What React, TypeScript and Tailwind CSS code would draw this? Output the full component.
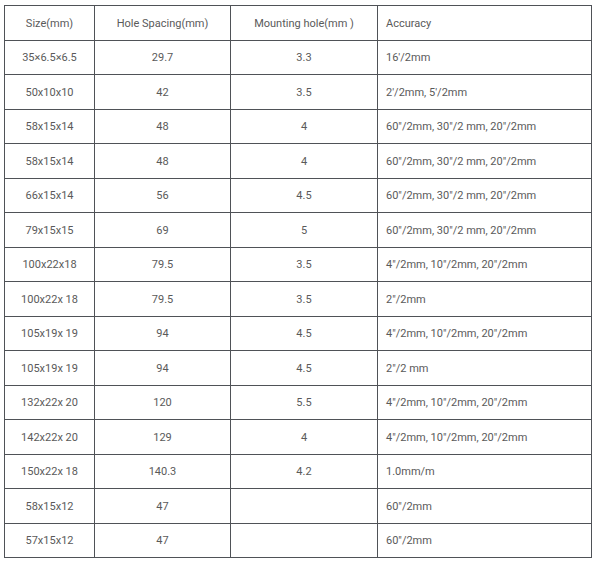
import React from 'react';

const rows: [string, string, string, string][] = [
  ['35×6.5×6.5', '29.7', '3.3', '16′/2mm'],
  ['50x10x10', '42', '3.5', '2′/2mm, 5′/2mm'],
  ['58x15x14', '48', '4', '60″/2mm, 30″/2 mm, 20″/2mm'],
  ['58x15x14', '48', '4', '60″/2mm, 30″/2 mm, 20″/2mm'],
  ['66x15x14', '56', '4.5', '60″/2mm, 30″/2 mm, 20″/2mm'],
  ['79x15x15', '69', '5', '60″/2mm, 30″/2 mm, 20″/2mm'],
  ['100x22x18', '79.5', '3.5', '4″/2mm, 10″/2mm, 20″/2mm'],
  ['100x22x 18', '79.5', '3.5', '2″/2mm'],
  ['105x19x 19', '94', '4.5', '4″/2mm, 10″/2mm, 20″/2mm'],
  ['105x19x 19', '94', '4.5', '2″/2 mm'],
  ['132x22x 20', '120', '5.5', '4"/2mm, 10″/2mm, 20″/2mm'],
  ['142x22x 20', '129', '4', '4″/2mm, 10″/2mm, 20″/2mm'],
  ['150x22x 18', '140.3', '4.2', '1.0mm/m'],
  ['58x15x12', '47', '', '60″/2mm'],
  ['57x15x12', '47', '', '60″/2mm'],
];

export default function App() {
  return (
    <div className="min-h-[564px] w-[596px] bg-white pl-[4px] pt-[5px] font-['Roboto',sans-serif] text-[11px] text-[#5a5a5a]">
      <table className="w-[587px] table-fixed border-collapse">
        <colgroup>
          <col className="w-[90px]" />
          <col className="w-[136px]" />
          <col className="w-[147px]" />
          <col className="w-[214px]" />
        </colgroup>
        <thead>
          <tr className="h-[35px]">
            <th className="border border-[#4f5257] pt-[2px] text-center font-normal">Size(mm)</th>
            <th className="border border-[#4f5257] pt-[2px] text-center font-normal">Hole Spacing(mm)</th>
            <th className="border border-[#4f5257] pt-[2px] text-center font-normal">Mounting hole(mm )</th>
            <th className="border border-[#4f5257] pt-[2px] pl-[8px] text-left font-normal">Accuracy</th>
          </tr>
        </thead>
        <tbody>
          {rows.map((r, i) => (
            <tr key={i} className="h-[34.47px]">
              <td className="border border-[#4f5257] pt-[2px] text-center">{r[0]}</td>
              <td className="border border-[#4f5257] pt-[2px] text-center">{r[1]}</td>
              <td className="border border-[#4f5257] pt-[2px] text-center">{r[2]}</td>
              <td className="border border-[#4f5257] pt-[2px] pl-[8px] text-left">{r[3]}</td>
            </tr>
          ))}
        </tbody>
      </table>
    </div>
  );
}
